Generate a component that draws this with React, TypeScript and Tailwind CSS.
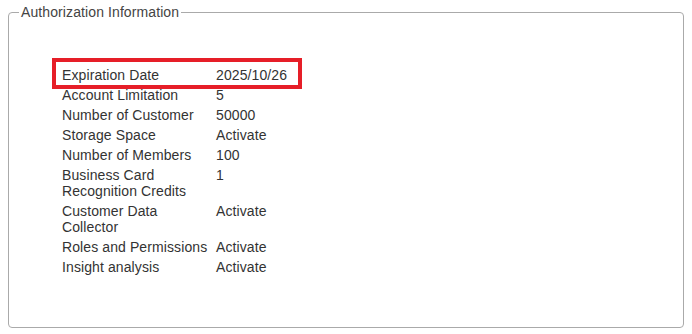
import React from "react";

const rows: [string, string][] = [
  ["Expiration Date", "2025/10/26"],
  ["Account Limitation", "5"],
  ["Number of Customer", "50000"],
  ["Storage Space", "Activate"],
  ["Number of Members", "100"],
  ["Business Card Recognition Credits", "1"],
  ["Customer Data Collector", "Activate"],
  ["Roles and Permissions", "Activate"],
  ["Insight analysis", "Activate"],
];

export default function App() {
  return (
    <div
      className="w-[692px] h-[334px] bg-white pt-1 px-2 pb-[6px] text-[14px] leading-4 text-[#333] tracking-[0.1px]"
      style={{ fontFamily: '"Liberation Sans", Arial, sans-serif' }}
    >
      <fieldset className="h-full border border-[#aaa] rounded-[4px]">
        <legend className="ml-[10px] px-[2px] text-[#444]">Authorization Information</legend>
        <div className="pl-[51px] pt-[45px]">
          <div className="relative w-fit">
            <div className="absolute left-[-8px] top-[-7px] w-[250px] h-[31px] border-4 border-[#e61e28]" />
            <table className="border-collapse">
              <tbody>
                {rows.map(([k, v]) => (
                  <tr key={k}>
                    <td className="w-[154px] p-[2px] align-top">{k}</td>
                    <td className="p-[2px] align-top">{v}</td>
                  </tr>
                ))}
              </tbody>
            </table>
          </div>
        </div>
      </fieldset>
    </div>
  );
}
